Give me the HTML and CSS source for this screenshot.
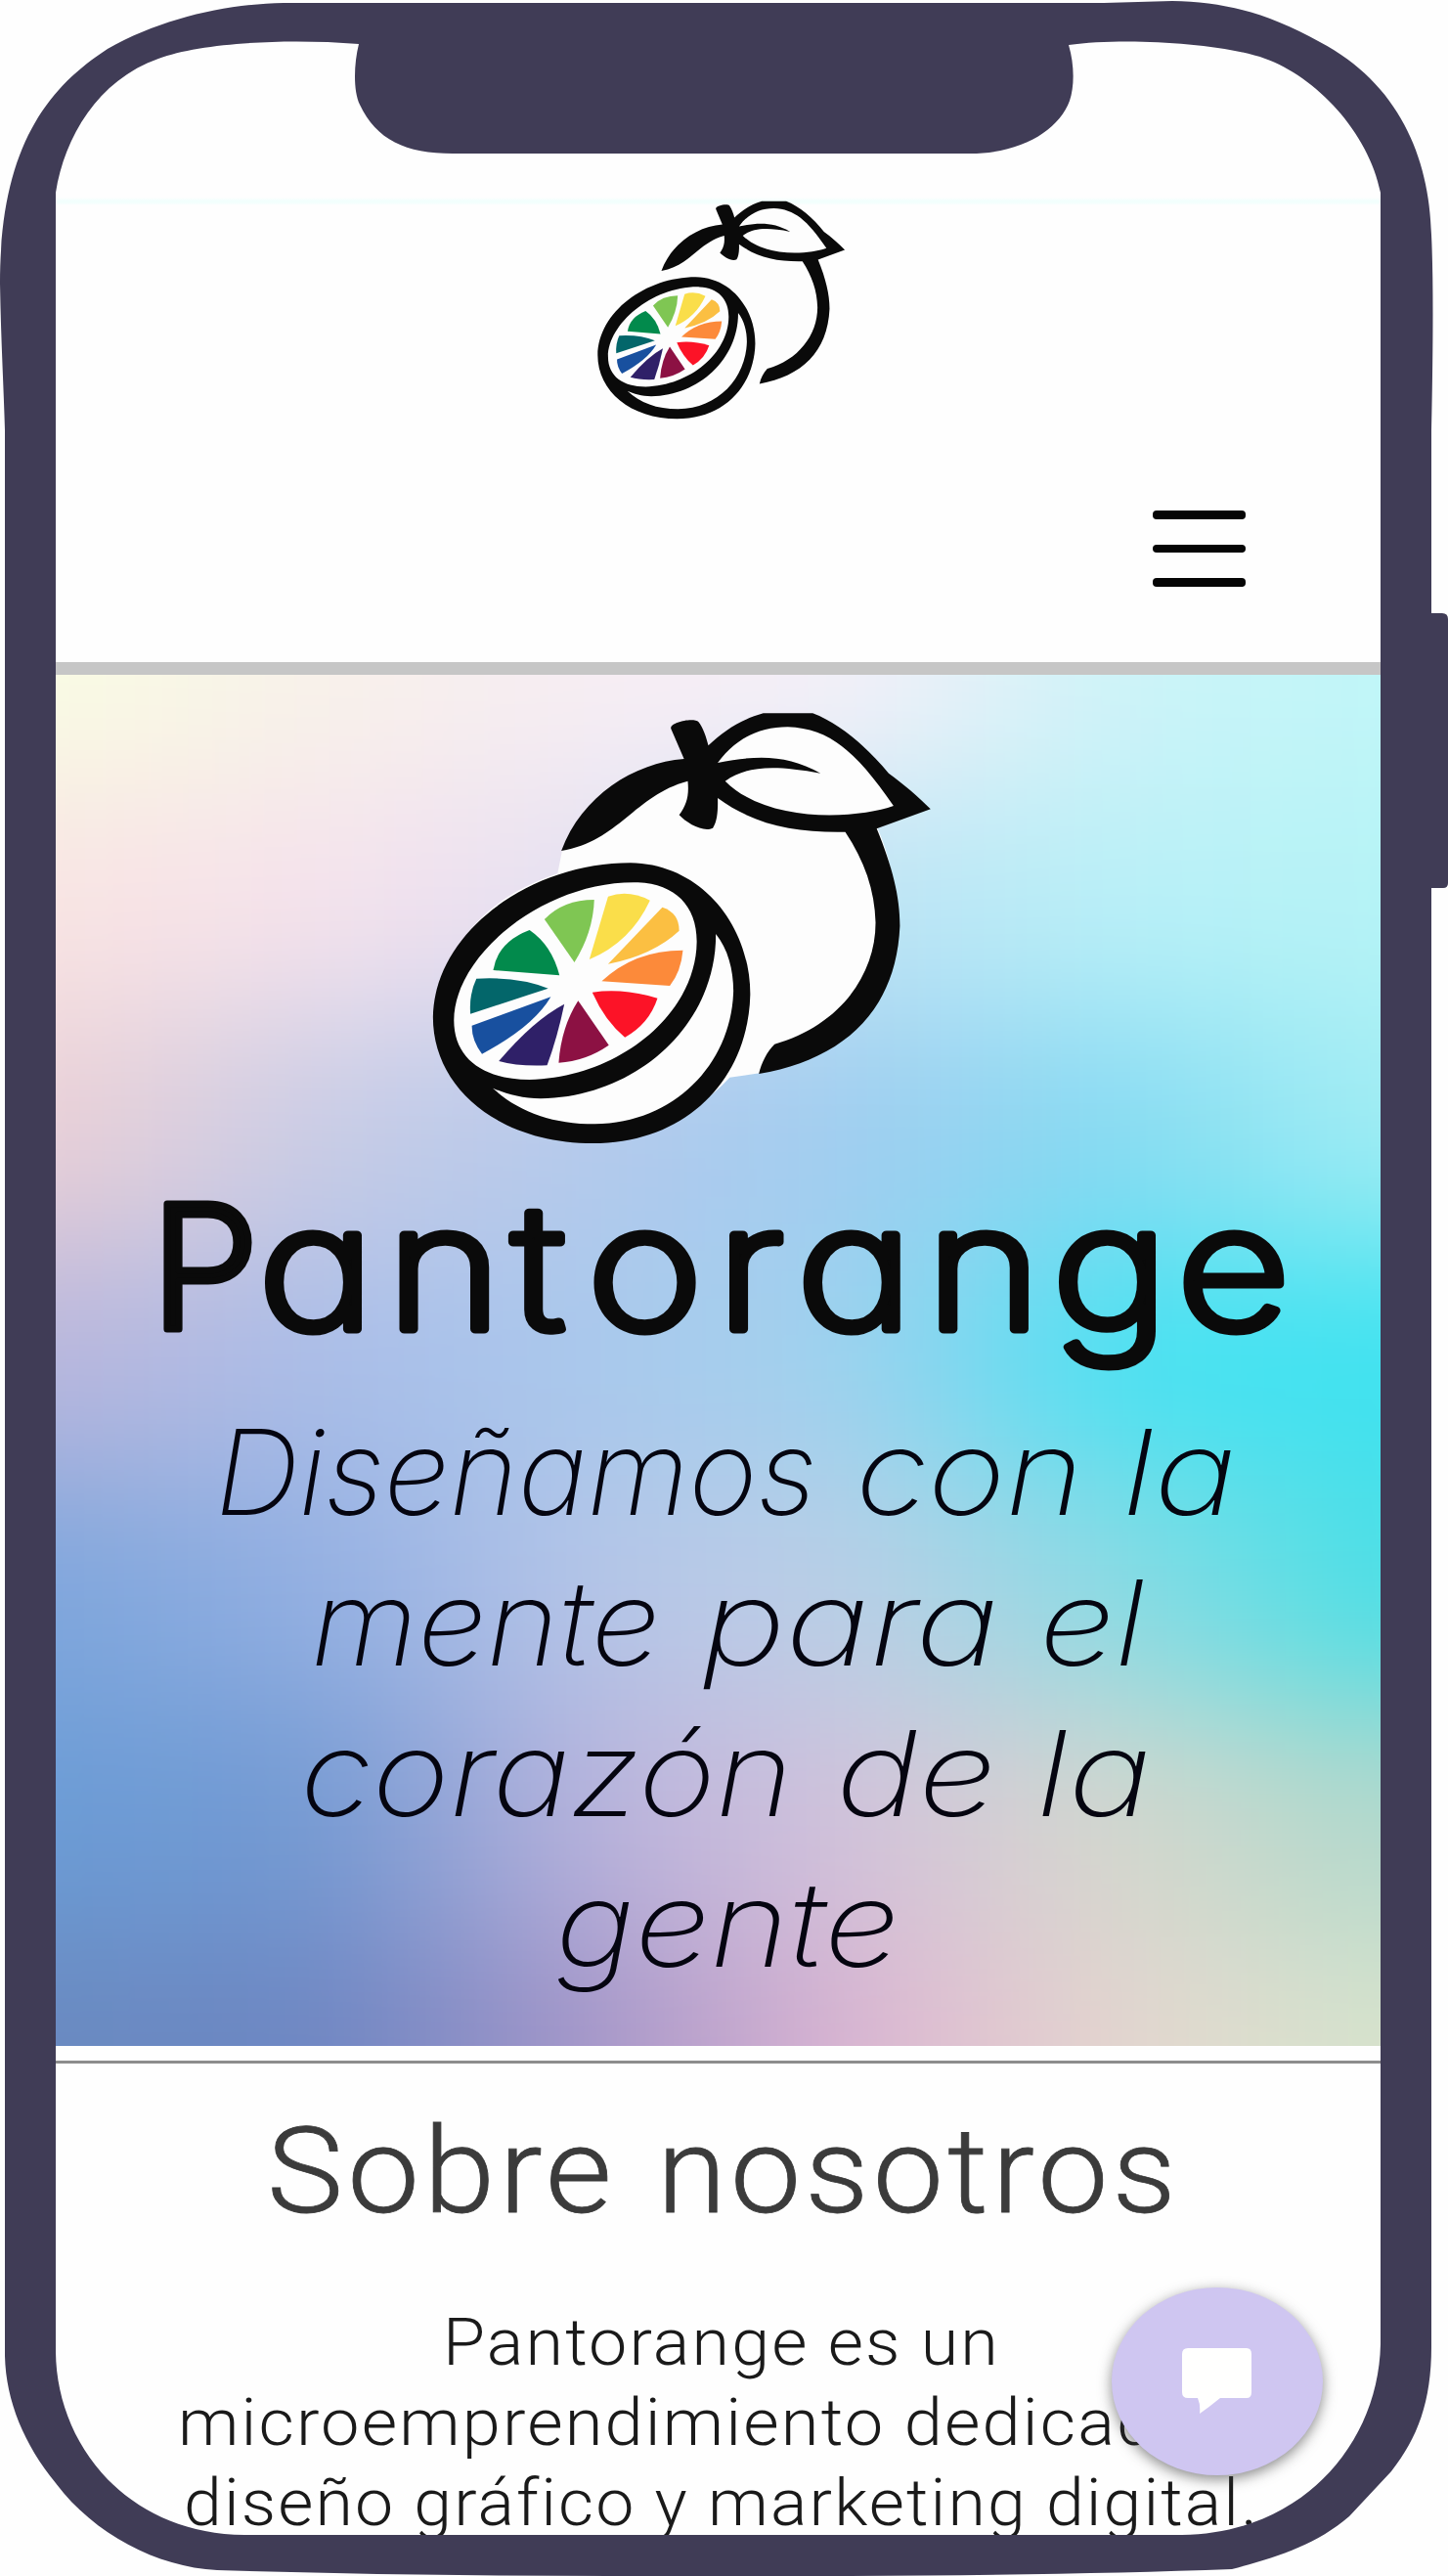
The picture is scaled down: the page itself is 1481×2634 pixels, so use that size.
FILE: index.html
```html
<!DOCTYPE html>
<html lang="es">
<head>
<meta charset="utf-8">
<title>Pantorange</title>
<link rel="stylesheet" href="styles.css">
</head>
<body>
<svg class="defs" width="0" height="0" aria-hidden="true">
  <symbol id="fruit" viewBox="0 0 1568 1500" preserveAspectRatio="none">
    <path fill="#fdfdfd" d="M445 580 L458 505 C540 300 700 240 800 240 L870 190 C960 90 1120 70 1220 170 L1440 380 L1300 440 C1400 700 1370 1100 985 1192 L905 1205 C800 1340 640 1380 540 1380 C300 1380 130 1220 130 1020 C130 800 260 650 445 580Z"/>
    <g fill="#0a0a0a">
      <path d="M455 510 C510 340 650 240 783 228 L748 135 C745 115 810 100 822 115 C835 135 842 160 848 187 C890 140 940 105 995 88 L1127 88 C1200 120 1270 190 1330 272 C1370 305 1410 345 1442 382 L1298 442 C1340 560 1360 650 1360 740 C1350 1000 1210 1150 983 1194 C990 1160 1005 1125 1025 1103 C1190 1050 1295 900 1295 730 C1293 630 1265 540 1214 452 C1080 455 970 430 873 348 C874 385 872 420 860 440 C835 455 790 425 770 400 C790 370 797 340 793 296 C650 340 610 480 455 510Z"/>
      <path fill-rule="evenodd" d="M640 547 C830 550 960 740 960 950 C955 1210 790 1407 540 1407 C290 1407 112 1240 112 1020 C115 760 370 547 640 547Z M660 607 C410 600 168 830 168 1030 C168 1150 250 1212 370 1212 C610 1205 815 1010 817 790 C818 680 760 612 660 607Z M868 765 C870 1040 660 1265 400 1270 C350 1270 305 1255 272 1238 C340 1310 430 1348 545 1348 C760 1345 910 1160 915 940 C915 875 900 810 868 765Z"/>
    </g>
    <path fill="#fdfdfd" d="M873 240 C920 165 985 130 1060 130 C1170 135 1240 200 1343 372 C1250 410 1010 430 893 296 C950 250 1020 245 1148 272 C1060 215 980 215 873 240Z"/>
    <path fill="#7fc653" d="M410 720 Q460 660 543 660 Q540 760 490 852Z"/>
    <path fill="#fade4a" d="M580 650 Q635 628 692 662 Q640 790 530 843Z"/>
    <path fill="#fbbf42" d="M725 683 Q770 700 770 755 Q700 830 580 857Z"/>
    <path fill="#fc8a3a" d="M780 815 Q775 880 745 924 L563 910 Q650 815 780 815Z"/>
    <path fill="#fc1327" d="M538 944 Q620 930 712 962 Q690 1040 625 1082 Q570 1030 538 944Z"/>
    <path fill="#8c1143" d="M500 970 L582 1106 Q520 1155 448 1160 Q455 1050 500 970Z"/>
    <path fill="#2f2068" d="M463 980 Q445 1080 417 1168 Q340 1172 288 1155 Q380 1030 463 980Z"/>
    <path fill="#18509f" d="M427 958 Q380 1050 243 1133 Q215 1090 216 1046Z"/>
    <path fill="#03666a" d="M228 902 Q340 895 420 932 L212 1010 Q208 950 228 902Z"/>
    <path fill="#028a4c" d="M370 753 Q430 800 450 892 L273 876 Q285 790 370 753Z"/>
  </symbol>
</svg>
<main class="phone">
  <div class="screen">
    <header class="topbar">
      <svg class="topbar-logo"><use href="#fruit"/></svg>
      <button class="menu" aria-label="Menú"><span></span><span></span><span></span></button>
    </header>
    <section class="hero">
      <div class="mesh"><i class="r1"></i><i class="r2"></i><i class="r3"></i><i class="r4"></i><i class="r5"></i><i class="r6"></i><i class="r7"></i></div>
      <svg class="hero-logo"><use href="#fruit"/></svg>
      <svg class="hero-text" viewBox="57 1200 1355 892">
        <g class="brand"><text x="154" y="1359">P</text><text class="brand-rest" transform="scale(1.14 1)" y="1359" x="231.7 347 459.5 527 643 715 831 944 1056">antorange</text></g>
        <g class="tagline">
          <text y="1549"><tspan x="220" textLength="615" lengthAdjust="spacingAndGlyphs">Diseñamos</tspan> <tspan x="875" textLength="233" lengthAdjust="spacingAndGlyphs">con</tspan> <tspan x="1148" textLength="117" lengthAdjust="spacingAndGlyphs">la</tspan></text>
          <text y="1703"><tspan x="318" textLength="357" lengthAdjust="spacingAndGlyphs">mente</tspan> <tspan x="718" textLength="304" lengthAdjust="spacingAndGlyphs">para</tspan> <tspan x="1063" textLength="108" lengthAdjust="spacingAndGlyphs">el</tspan></text>
          <text y="1857"><tspan x="307" textLength="504" lengthAdjust="spacingAndGlyphs">corazón</tspan> <tspan x="855" textLength="164" lengthAdjust="spacingAndGlyphs">de</tspan> <tspan x="1060" textLength="118" lengthAdjust="spacingAndGlyphs">la</tspan></text>
          <text x="568" y="2011" textLength="352" lengthAdjust="spacingAndGlyphs">gente</text>
        </g>
      </svg>
    </section>
    <section class="about">
      <svg class="about-text" viewBox="57 2110 1355 482">
        <text class="about-title" y="2262"><tspan x="273" textLength="357" lengthAdjust="spacingAndGlyphs">Sobre</tspan> <tspan x="672" textLength="535" lengthAdjust="spacingAndGlyphs">nosotros</tspan></text>
        <g class="about-body">
          <text x="453" y="2418" textLength="570" lengthAdjust="spacingAndGlyphs">Pantorange es un</text>
          <text x="182" y="2500" textLength="1120" lengthAdjust="spacingAndGlyphs">microemprendimiento dedicado al</text>
          <text x="188" y="2582" textLength="1100" lengthAdjust="spacingAndGlyphs">diseño gráfico y marketing digital.</text>
        </g>
      </svg>
      <button class="chat" aria-label="Chat">
        <svg width="72" height="68" viewBox="0 0 72 68"><path fill="#fffffe" d="M6 0H66Q71 0 71 6V45Q71 51 66 51H39Q28 60 18 67Q19 58 16 51H6Q0 51 0 45V6Q0 0 6 0Z"/></svg>
      </button>
    </section>
  </div>
  <svg class="frame" viewBox="0 0 1481 2634">
    <path class="outside" fill-rule="evenodd" d="M0 0H1481V2634H0Z M290 3 C233 4 167 18 110 50 C45 92 0 155 0 290 C1 350 4 400 5 440 L5 2409 C6 2455 25 2500 57 2539 C95 2590 160 2625 222 2628 Q420 2634 623 2634 H869 Q1100 2633 1260 2627 C1305 2615 1345 2603 1380 2573 L1423 2527 C1450 2493 1464 2455 1464 2400 V908 H1476 Q1481 908 1481 903 V633 Q1481 627 1475 627 H1464 V440 Q1467 300 1464 240 C1462 160 1430 85 1350 43 C1295 12 1250 2 1199 1 L1129 3Z"/>
    <path class="bezel" fill-rule="evenodd" d="M290 3 C233 4 167 18 110 50 C45 92 0 155 0 290 C1 350 4 400 5 440 L5 2409 C6 2455 25 2500 57 2539 C95 2590 160 2625 222 2628 Q420 2634 623 2634 H869 Q1100 2633 1260 2627 C1305 2615 1345 2603 1380 2573 L1423 2527 C1450 2493 1464 2455 1464 2400 V908 H1476 Q1481 908 1481 903 V633 Q1481 627 1475 627 H1464 V440 Q1467 300 1464 240 C1462 160 1430 85 1350 43 C1295 12 1250 2 1199 1 L1129 3Z M57 197 C66 140 100 82 162 60 C205 44 290 39 367 45 C362 65 361 92 368 107 C385 143 415 157 463 157 H992 C1045 157 1083 133 1094 103 C1099 88 1099 66 1093 46 C1150 38 1250 44 1294 60 C1345 78 1400 135 1412 197 V2397 C1410 2500 1330 2591 1209 2592 H250 C130 2591 58 2500 57 2405Z"/>
  </svg>
</main>
</body>
</html>
```
FILE: styles.css
```css
body { margin: 0; background: #fefefe; }
.defs { position: absolute; }
.phone { position: relative; width: 1481px; height: 2634px; overflow: hidden; background: #fefefe; }
.screen { width: 1355px; height: 2592px; margin-left: 57px; overflow: hidden; display: flex; flex-direction: column; }
.screen > * { flex-shrink: 0; }
.topbar { box-sizing: border-box; height: 690px; border-bottom: 13px solid #c6c6c6; padding-top: 191px; display: flex; flex-direction: column; background: linear-gradient(#fefefe 202px, #f2fffd 205px, #f2fffd 207px, #fefefe 210px); }
.topbar-logo { width: 298px; height: 253px; margin-left: 533px; }
.menu { align-self: flex-end; margin: 78px 138px 0 0; width: 95px; padding: 0; border: 0; background: none; display: flex; flex-direction: column; gap: 26px; }
.menu span { height: 8.5px; border-radius: 4px; background: #050505; }
.hero { position: relative; height: 1402px; overflow: hidden; display: flex; flex-direction: column; }
.hero-logo { position: relative; width: 600px; height: 500px; margin: 10px 0 0 343px; }
.hero-text { position: relative; width: 1355px; height: 892px; overflow: visible; }
.brand { font: 300 176px Inter, sans-serif; font-feature-settings: "cv11"; fill: #0a0a0a; stroke: #0a0a0a; stroke-width: 7; stroke-linejoin: round; }
.brand-rest { font-weight: 200; stroke-width: 9; }
.tagline { font: italic 200 121px Inter, sans-serif; font-feature-settings: "cv11"; fill: #050510; }
.mesh { position: absolute; inset: -317px -200px; display: flex; flex-direction: column; filter: blur(75px); }
.mesh i { flex: 0 0 234px; background: linear-gradient(90deg, var(--a) 200px, var(--b) 471px, var(--c) 742px, var(--d) 1013px, var(--e) 1284px, var(--f) 1555px); }
.mesh .r1, .mesh .r7 { flex-basis: 434px; }
.r1 { --a: #f9fce3; --b: #f8f1ea; --c: #f7edf3; --d: #f6f0f8; --e: #cdf3f8; --f: #c0f6f8; }
.r2 { --a: #f9e4e3; --b: #f5e2ec; --c: #e6e0f2; --d: #bde3f5; --e: #b9f0f7; --f: #b5f3f6; }
.r3 { --a: #ebd0d6; --b: #c8cce6; --c: #b4c9ec; --d: #a0cdf0; --e: #84daf2; --f: #a0edf3; }
.r4 { --a: #b9b6dc; --b: #a9bde8; --c: #aac8ec; --d: #a0d2ee; --e: #48e2f2; --f: #3ee2f0; }
.r5 { --a: #7ea6dc; --b: #93afe2; --c: #b5c5e8; --d: #bccfe6; --e: #8cdbe3; --f: #4adfe5; }
.r6 { --a: #6b9cd6; --b: #7399d2; --c: #b8b2dc; --d: #d3c2db; --e: #d6d8cd; --f: #b0d8cc; }
.r7 { --a: #6a8ac0; --b: #6c85c2; --c: #a495c8; --d: #dcb4d2; --e: #e5d6cf; --f: #d6e4cc; }
.about { position: relative; height: 500px; padding-top: 15px; box-sizing: border-box; background: #fefefe; }
.about-text { display: block; box-sizing: border-box; width: 1355px; height: 485px; border-top: 3px solid #8d8d8d; }
.about-title { font: 300 123px Roboto, sans-serif; letter-spacing: 4px; fill: #3b3b3b; stroke: #3b3b3b; stroke-width: .8; }
.about-body { font: 300 66px Roboto, sans-serif; letter-spacing: 2px; fill: #1a1a1a; }
.chat { position: absolute; left: 1080px; top: 247px; width: 216px; height: 192px; border: 0; padding: 0; border-radius: 50%; background: #cfc6f1; box-shadow: 0 4px 14px rgba(60, 60, 60, .6); display: flex; align-items: center; justify-content: center; }
.frame { position: absolute; inset: 0; width: 1481px; height: 2634px; }
.outside { fill: #fefefe; }
.bezel { fill: #403c56; }
```
